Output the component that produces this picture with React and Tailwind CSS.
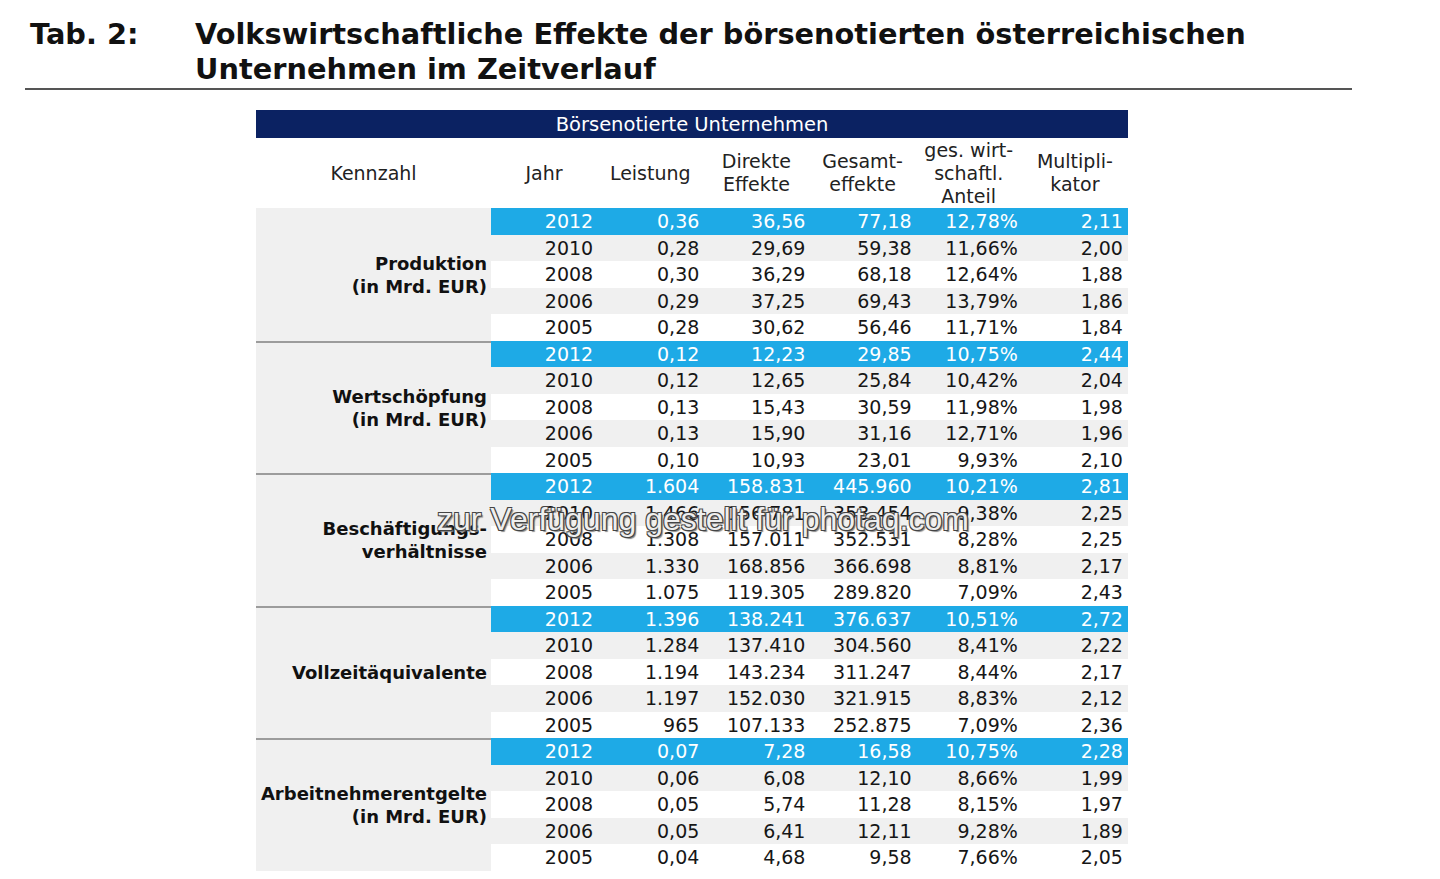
import React from "react";

// Daten der Tabelle: je Kennzahl fünf Jahre
const groups = [
  {
    label: ["Produktion", "(in Mrd. EUR)"],
    rows: [
      ["2012", "0,36", "36,56", "77,18", "12,78%", "2,11"],
      ["2010", "0,28", "29,69", "59,38", "11,66%", "2,00"],
      ["2008", "0,30", "36,29", "68,18", "12,64%", "1,88"],
      ["2006", "0,29", "37,25", "69,43", "13,79%", "1,86"],
      ["2005", "0,28", "30,62", "56,46", "11,71%", "1,84"],
    ],
  },
  {
    label: ["Wertschöpfung", "(in Mrd. EUR)"],
    rows: [
      ["2012", "0,12", "12,23", "29,85", "10,75%", "2,44"],
      ["2010", "0,12", "12,65", "25,84", "10,42%", "2,04"],
      ["2008", "0,13", "15,43", "30,59", "11,98%", "1,98"],
      ["2006", "0,13", "15,90", "31,16", "12,71%", "1,96"],
      ["2005", "0,10", "10,93", "23,01", "9,93%", "2,10"],
    ],
  },
  {
    label: ["Beschäftigungs-", "verhältnisse"],
    rows: [
      ["2012", "1.604", "158.831", "445.960", "10,21%", "2,81"],
      ["2010", "1.466", "156.781", "353.454", "9,38%", "2,25"],
      ["2008", "1.308", "157.011", "352.531", "8,28%", "2,25"],
      ["2006", "1.330", "168.856", "366.698", "8,81%", "2,17"],
      ["2005", "1.075", "119.305", "289.820", "7,09%", "2,43"],
    ],
  },
  {
    label: ["Vollzeitäquivalente"],
    rows: [
      ["2012", "1.396", "138.241", "376.637", "10,51%", "2,72"],
      ["2010", "1.284", "137.410", "304.560", "8,41%", "2,22"],
      ["2008", "1.194", "143.234", "311.247", "8,44%", "2,17"],
      ["2006", "1.197", "152.030", "321.915", "8,83%", "2,12"],
      ["2005", "965", "107.133", "252.875", "7,09%", "2,36"],
    ],
  },
  {
    label: ["Arbeitnehmerentgelte", "(in Mrd. EUR)"],
    rows: [
      ["2012", "0,07", "7,28", "16,58", "10,75%", "2,28"],
      ["2010", "0,06", "6,08", "12,10", "8,66%", "1,99"],
      ["2008", "0,05", "5,74", "11,28", "8,15%", "1,97"],
      ["2006", "0,05", "6,41", "12,11", "9,28%", "1,89"],
      ["2005", "0,04", "4,68", "9,58", "7,66%", "2,05"],
    ],
  },
];

const headers = [
  ["Jahr"],
  ["Leistung"],
  ["Direkte", "Effekte"],
  ["Gesamt-", "effekte"],
  ["ges. wirt-", "schaftl.", "Anteil"],
  ["Multipli-", "kator"],
];

const rowBg = ["bg-[#1eaae6] text-white", "bg-[#f0f0f0]", "bg-white", "bg-[#f0f0f0]", "bg-white"];

const Group = ({ group, first }) => (
  <div className="flex">
    <div
      className={
        "w-[235px] bg-[#f0f0f0] flex flex-col justify-center items-end pr-[4px] pt-[2px] font-bold text-[18px] leading-[23px] text-[#111] " +
        (first ? "" : "shadow-[inset_0_2px_0_#9c9c9c]")
      }
    >
      {group.label.map((l) => (
        <span key={l}>{l}</span>
      ))}
    </div>
    <div className="flex-1 flex flex-col">
      {group.rows.map((r, i) => (
        <div key={i} className={"flex h-[26.5px] items-center text-[19px] text-[#161616] " + rowBg[i]}>
          {r.map((c, j) => (
            <div key={j} className={"w-[106.17px] text-right " + (j === 5 ? "pr-[5px]" : "pr-[4px]")}>
              {c}
            </div>
          ))}
        </div>
      ))}
    </div>
  </div>
);

export default function App() {
  return (
    <div className="relative w-[1440px] h-[879px] bg-white overflow-hidden font-['DejaVu_Sans',sans-serif] text-[#111]">
      {/* Titel */}
      <div className="flex pt-[17px] pl-[30px] font-bold text-[28.8px] leading-[35px] text-[#111]">
        <div className="w-[165px]">Tab. 2:</div>
        <div>
          Volkswirtschaftliche Effekte der börsenotierten österreichischen
          <br />
          Unternehmen im Zeitverlauf
        </div>
      </div>
      <div className="ml-[25px] mt-[1px] w-[1327px] h-[2px] bg-[#555]" />

      {/* Tabelle */}
      <div className="ml-[256px] mt-[20px] w-[872px]">
        <div className="h-[28px] bg-[#0b2262] text-white text-[19.5px] flex items-center justify-center pt-[2px]">
          Börsenotierte Unternehmen
        </div>
        <div className="flex h-[70px] items-center text-[19px] leading-[23px] text-[#222]">
          <div className="w-[235px] text-center">Kennzahl</div>
          {headers.map((h, i) => (
            <div key={i} className="w-[106.17px] flex flex-col items-center">
              {h.map((l) => (
                <span key={l}>{l}</span>
              ))}
            </div>
          ))}
        </div>
        {groups.map((g, i) => (
          <Group key={i} group={g} first={i === 0} />
        ))}
      </div>

      {/* Wasserzeichen */}
      <div className="absolute left-[437px] top-[495px] font-['Liberation_Sans',sans-serif] text-[32px] text-[#eeeeee] [text-shadow:1px_1px_0_#444,-1px_-1px_0_#444,1px_-1px_0_#444,-1px_1px_0_#444,2px_2px_1px_#888]">
        zur Verfügung gestellt für photaq.com
      </div>
    </div>
  );
}
